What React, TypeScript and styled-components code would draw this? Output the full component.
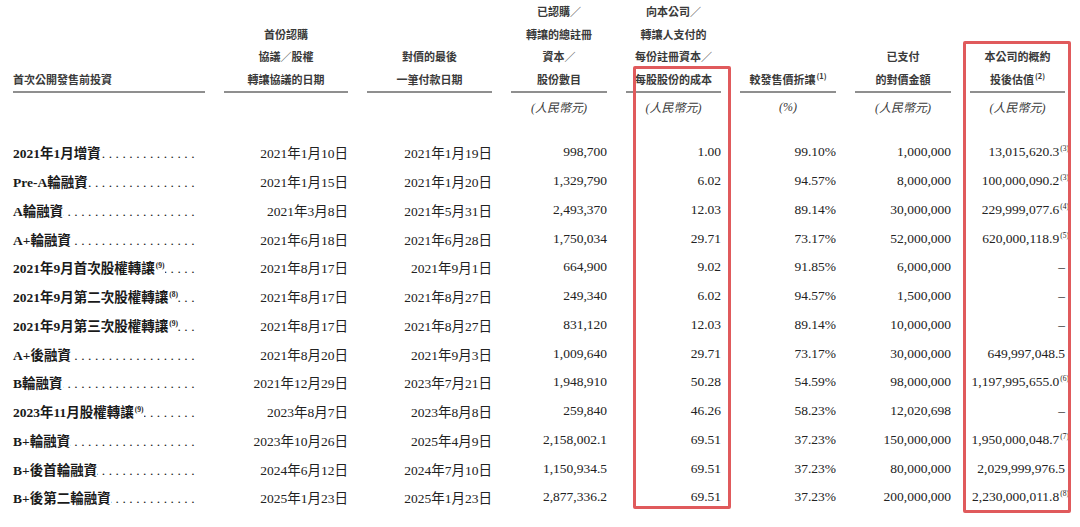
import React from 'react';
import styled, { createGlobalStyle } from 'styled-components';

const GlobalStyle = createGlobalStyle`
  html, body {
    margin: 0;
    padding: 0;
    background: #fff;
  }
  body {
    font-family: "Liberation Serif", "Noto Sans CJK TC", serif;
    color: #1e1e1e;
  }
`;

const COLS = '192px 124px 125px 96px 95px 96px 96px 95px';

const Sheet = styled.div`
  position: relative;
  width: 1080px;
  height: 527px;
  padding-left: 13px;
  box-sizing: border-box;
  overflow: hidden;
`;

const Grid = styled.div`
  display: grid;
  grid-template-columns: ${COLS};
  column-gap: 19px;
`;

const HeadRow = styled(Grid)`
  align-items: end;
`;

const HeadCell = styled.div<{ $left?: boolean }>`
  font-family: "Noto Sans CJK TC", sans-serif;
  font-size: 11px;
  font-weight: 700;
  line-height: 22.5px;
  padding-bottom: 1px;
  text-align: ${(p) => (p.$left ? 'left' : 'center')};
  border-bottom: 2px solid #8f8f8f;
  color: #3a3a3a;
  white-space: nowrap;
`;

const HeadLine = styled.div``;

const UnitRow = styled(Grid)`
  height: 28px;
  align-items: center;
`;

const Unit = styled.div`
  font-family: "Liberation Serif", "Noto Sans CJK TC", serif;
  font-style: italic;
  font-size: 12px;
  color: #3a3a3a;
  text-align: center;
`;

const Body = styled.div`
  margin-top: 17px;
`;

const Row = styled(Grid)`
  height: 28.75px;
  align-items: center;
  font-size: 13.5px;
`;

const LabelCell = styled.div`
  display: flex;
  align-items: baseline;
  padding-right: 7px;
  font-weight: 700;
  white-space: nowrap;
  color: #1a1a1a;
`;

const Leader = styled.span`
  flex: 1;
  min-width: 0;
  overflow: hidden;
  direction: rtl;
  font-weight: 400;
  letter-spacing: 3.5px;
  &::after {
    content: '................................................';
  }
`;

const Value = styled.div`
  text-align: right;
  white-space: nowrap;
  color: #222;
`;

const Note = styled.sup<{ $hang?: boolean }>`
  font-size: 7.5px;
  line-height: 0;
  vertical-align: 5px;
  margin-left: 1px;
  margin-right: ${(p) => (p.$hang ? '-4px' : '0')};
`;

const Highlight = styled.div<{ $x: number; $y: number; $w: number; $h: number }>`
  position: absolute;
  left: ${(p) => p.$x}px;
  top: ${(p) => p.$y}px;
  width: ${(p) => p.$w}px;
  height: ${(p) => p.$h}px;
  border: 3px solid #e05a5c;
  border-radius: 2px;
  box-sizing: border-box;
  pointer-events: none;
`;

const headers: string[][] = [
  ['首次公開發售前投資'],
  ['首份認購', '協議／股權', '轉讓協議的日期'],
  ['對價的最後', '一筆付款日期'],
  ['已認購／', '轉讓的總註冊', '資本／', '股份數目'],
  ['向本公司／', '轉讓人支付的', '每份註冊資本／', '每股股份的成本'],
  ['較發售價折讓¹'],
  ['已支付', '的對價金額'],
  ['本公司的概約', '投後估值²'],
];

const units = ['', '', '', '(人民幣元)', '(人民幣元)', '(%)', '(人民幣元)', '(人民幣元)'];

type Rec = {
  label: string;
  ln?: string;
  sub: string;
  paid: string;
  shares: string;
  cost: string;
  disc: string;
  amount: string;
  val: string;
  vn?: string;
};

const rows: Rec[] = [
  { label: '2021年1月增資', sub: '2021年1月10日', paid: '2021年1月19日', shares: '998,700', cost: '1.00', disc: '99.10%', amount: '1,000,000', val: '13,015,620.3', vn: '3' },
  { label: 'Pre-A輪融資', sub: '2021年1月15日', paid: '2021年1月20日', shares: '1,329,790', cost: '6.02', disc: '94.57%', amount: '8,000,000', val: '100,000,090.2', vn: '3' },
  { label: 'A輪融資', sub: '2021年3月8日', paid: '2021年5月31日', shares: '2,493,370', cost: '12.03', disc: '89.14%', amount: '30,000,000', val: '229,999,077.6', vn: '4' },
  { label: 'A+輪融資', sub: '2021年6月18日', paid: '2021年6月28日', shares: '1,750,034', cost: '29.71', disc: '73.17%', amount: '52,000,000', val: '620,000,118.9', vn: '5' },
  { label: '2021年9月首次股權轉讓', ln: '9', sub: '2021年8月17日', paid: '2021年9月1日', shares: '664,900', cost: '9.02', disc: '91.85%', amount: '6,000,000', val: '–' },
  { label: '2021年9月第二次股權轉讓', ln: '8', sub: '2021年8月17日', paid: '2021年8月27日', shares: '249,340', cost: '6.02', disc: '94.57%', amount: '1,500,000', val: '–' },
  { label: '2021年9月第三次股權轉讓', ln: '9', sub: '2021年8月17日', paid: '2021年8月27日', shares: '831,120', cost: '12.03', disc: '89.14%', amount: '10,000,000', val: '–' },
  { label: 'A+後融資', sub: '2021年8月20日', paid: '2021年9月3日', shares: '1,009,640', cost: '29.71', disc: '73.17%', amount: '30,000,000', val: '649,997,048.5' },
  { label: 'B輪融資', sub: '2021年12月29日', paid: '2023年7月21日', shares: '1,948,910', cost: '50.28', disc: '54.59%', amount: '98,000,000', val: '1,197,995,655.0', vn: '6' },
  { label: '2023年11月股權轉讓', ln: '9', sub: '2023年8月7日', paid: '2023年8月8日', shares: '259,840', cost: '46.26', disc: '58.23%', amount: '12,020,698', val: '–' },
  { label: 'B+輪融資', sub: '2023年10月26日', paid: '2025年4月9日', shares: '2,158,002.1', cost: '69.51', disc: '37.23%', amount: '150,000,000', val: '1,950,000,048.7', vn: '7' },
  { label: 'B+後首輪融資', sub: '2024年6月12日', paid: '2024年7月10日', shares: '1,150,934.5', cost: '69.51', disc: '37.23%', amount: '80,000,000', val: '2,029,999,976.5' },
  { label: 'B+後第二輪融資', sub: '2025年1月23日', paid: '2025年1月23日', shares: '2,877,336.2', cost: '69.51', disc: '37.23%', amount: '200,000,000', val: '2,230,000,011.8', vn: '8' },
];

const renderHead = (line: string) => {
  const m = line.match(/^(.*?)([¹²])$/);
  if (!m) return line;
  return (
    <>
      {m[1]}
      <Note>({m[2] === '¹' ? '1' : '2'})</Note>
    </>
  );
};

const App = () => (
  <>
    <GlobalStyle />
    <Sheet>
      <HeadRow>
        {headers.map((lines, i) => (
          <HeadCell key={i} $left={i === 0}>
            {lines.map((l) => (
              <HeadLine key={l}>{renderHead(l)}</HeadLine>
            ))}
          </HeadCell>
        ))}
      </HeadRow>
      <UnitRow>
        {units.map((u, i) => (
          <Unit key={i}>{u}</Unit>
        ))}
      </UnitRow>
      <Body>
        {rows.map((r) => (
          <Row key={r.label}>
            <LabelCell>
              <span>
                {r.label}
                {r.ln && <Note>({r.ln})</Note>}
              </span>
              <Leader />
            </LabelCell>
            <Value>{r.sub}</Value>
            <Value>{r.paid}</Value>
            <Value>{r.shares}</Value>
            <Value>{r.cost}</Value>
            <Value>{r.disc}</Value>
            <Value>{r.amount}</Value>
            <Value>
              {r.val}
              {r.vn && <Note $hang>({r.vn})</Note>}
            </Value>
          </Row>
        ))}
      </Body>
      <Highlight $x={633} $y={66} $w={98} $h={443} />
      <Highlight $x={963} $y={41} $w={108} $h={472} />
    </Sheet>
  </>
);

export default App;
